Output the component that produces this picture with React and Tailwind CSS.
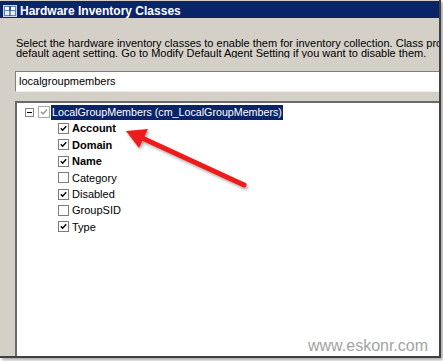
const fields = [
  { name: 'Account', checked: true, bold: true },
  { name: 'Domain', checked: true, bold: true },
  { name: 'Name', checked: true, bold: true },
  { name: 'Category', checked: false, bold: false },
  { name: 'Disabled', checked: true, bold: false },
  { name: 'GroupSID', checked: false, bold: false },
  { name: 'Type', checked: true, bold: false },
];

const Check = ({ color = '#000' }) => (
  <svg viewBox="0 0 11 11" className="w-full h-full">
    <path d="M2.2 5.2 L4.4 7.6 L8.8 2.8" fill="none" stroke={color} strokeWidth="1.7" />
  </svg>
);

const WindowIcon = () => (
  <svg viewBox="0 0 14 12" className="w-[14px] h-[12px] shrink-0">
    <rect x="0.5" y="0.5" width="13" height="11" fill="#5d7fc0" stroke="#c9d6ee" />
    <rect x="2" y="2" width="4" height="3" fill="#ffffff" />
    <rect x="8" y="2" width="4" height="3" fill="#ffffff" />
    <rect x="2" y="6" width="10" height="4" fill="#e8eef9" />
    <rect x="6.5" y="1" width="1" height="10" fill="#1b2f66" />
  </svg>
);

const FieldRow = ({ field }) => (
  <div className="h-[16.4px] flex items-center">
    <div className="ml-[41px] w-[11px] h-[11px] border border-[#7c7c7c] bg-white shrink-0">
      {field.checked && <Check />}
    </div>
    <span className={`ml-[3px] text-[11px] text-black ${field.bold ? 'font-bold' : ''}`}>
      {field.name}
    </span>
  </div>
);

export default function App() {
  return (
    <div className="w-[443px] h-[361px] bg-white relative overflow-hidden font-['Liberation_Sans',Arial,sans-serif]">
      <div className="w-[441px] h-[358px] bg-[#d4d0c8] border-r-2 border-b-2 border-[#404040] shadow-[2px_2px_3px_rgba(0,0,0,0.35)] flex flex-col pt-[1px] overflow-hidden">
        <div className="h-[17px] bg-[#0a246a] flex items-start pt-[4px] shrink-0">
          <div className="ml-[3px]">
            <WindowIcon />
          </div>
          <span className="ml-[3px] text-white font-bold text-[12px] leading-[14px] -mt-[1px]">
            Hardware Inventory Classes
          </span>
        </div>

        <div className="mt-[20px] pl-[16px] text-[11px] leading-[10px] text-black whitespace-nowrap overflow-hidden">
          <div>Select the hardware inventory classes to enable them for inventory collection. Class properties</div>
          <div>default agent setting. Go to Modify Default Agent Setting if you want to disable them.</div>
        </div>

        <div className="mt-[13px] ml-[15px] h-[21px] bg-white border-t border-l border-[#808080] border-b border-b-[#eeeeee] flex items-center pl-[3px] text-[11px] text-black shrink-0">
          localgroupmembers
        </div>

        <div className="mt-[9px] ml-[15px] flex-1 bg-white border-t-2 border-l-2 border-[#6a6a6a] pt-[1px]">
          <div className="h-[16.4px] flex items-center">
            <div className="ml-[8px] w-[9px] h-[9px] border border-[#848484] bg-white flex items-center justify-center shrink-0">
              <div className="w-[5px] h-[1px] bg-black" />
            </div>
            <div className="ml-[4px] w-[12px] h-[12px] border border-[#a9a9a9] bg-white shrink-0">
              <Check color="#9a9a9a" />
            </div>
            <span className="ml-[1px] h-[15px] px-[1px] bg-[#0a246a] text-white text-[10.7px] leading-[15px] whitespace-nowrap">
              LocalGroupMembers (cm_LocalGroupMembers)
            </span>
          </div>
          {fields.map((f) => (
            <FieldRow key={f.name} field={f} />
          ))}
        </div>
      </div>

      <svg className="absolute inset-0 pointer-events-none" width="443" height="361" viewBox="0 0 443 361">
        <defs>
          <filter id="shadow" x="-20%" y="-20%" width="140%" height="140%">
            <feDropShadow dx="1.5" dy="2" stdDeviation="1.5" floodColor="#000" floodOpacity="0.35" />
          </filter>
        </defs>
        <g filter="url(#shadow)">
          <line x1="244" y1="185" x2="140" y2="137" stroke="#ec1c1c" strokeWidth="5" strokeLinecap="round" />
          <polygon points="126,131 148,129 139,148" fill="#ec1c1c" />
        </g>
      </svg>

      <span className="absolute left-[308px] top-[338px] text-[16px] leading-none text-[#a3a3a3] [text-shadow:1px_1px_1px_rgba(255,255,255,0.9)]">
        www.eskonr.com
      </span>
    </div>
  );
}
